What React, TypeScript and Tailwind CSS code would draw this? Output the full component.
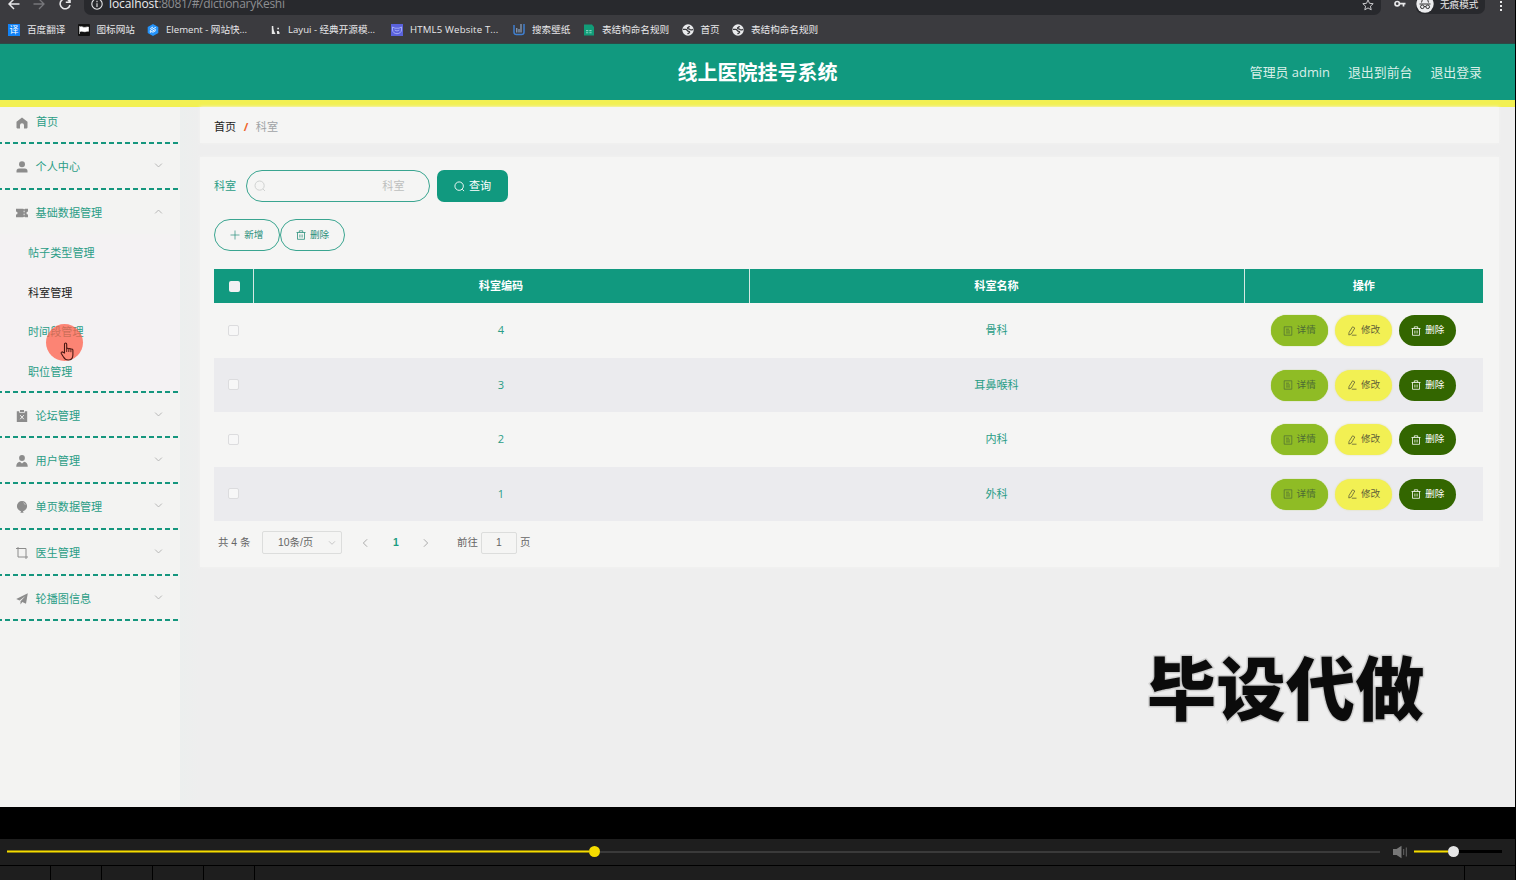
import { ReactNode } from "react";
import clsx from "clsx";

interface IconProps {
  className?: string;
}

const HomeIcon = ({ className }: IconProps) => (
  <svg viewBox="0 0 12 12" className={className} fill="currentColor">
    <path d="M6 .4 11.500 4.800v5.800a.8.8 0 0 1-.8.8H8V8.300a2 2 0 0 0-4 0v3.100H1.300a.8.8 0 0 1-.8-.8V4.800z" />
  </svg>
);

const UserIcon = ({ className }: IconProps) => (
  <svg viewBox="0 0 12 12" className={className} fill="currentColor">
    <circle cx="6" cy="3.2" r="3" />
    <path d="M.5 11.600v-1.600a2.600 2.600 0 0 1 2.600-2.600h5.800a2.600 2.600 0 0 1 2.600 2.600v1.600z" />
  </svg>
);

const TicketIcon = ({ className }: IconProps) => (
  <svg viewBox="0 0 13 10" className={className} fill="currentColor">
    <path d="M0 .3h7.800l1 1 1-1H13v3a1.700 1.700 0 0 0 0 3.400v3H9.800l-1-1-1 1H0v-3a1.700 1.700 0 0 0 0-3.400z" />
    <path d="M8.800 2.500v1.700M8.800 5.700v1.700" stroke="#f3f3f2" strokeWidth="1" />
  </svg>
);

const ClipboardIcon = ({ className }: IconProps) => (
  <svg viewBox="0 0 12 12" className={className} fill="currentColor">
    <path d="M.8 1.200h2.400v1.600h5.600V1.200h2.400V12H.8z" />
    <path d="M4 0h4v2H4z" />
    <path d="m4.200 5.200 3.600 4M7.800 5.200l-3.600 4" stroke="#f3f3f2" strokeWidth="1" />
  </svg>
);

const PersonIcon = ({ className }: IconProps) => (
  <svg viewBox="0 0 12 12" className={className} fill="currentColor">
    <circle cx="6" cy="3" r="2.900" />
    <path d="M.2 11.800c.1-3 1.300-4.600 3.700-5l2.100 1.700 2.100-1.700c2.400.4 3.600 2 3.700 5z" />
  </svg>
);

const BalloonIcon = ({ className }: IconProps) => (
  <svg viewBox="0 0 12 13" className={className} fill="currentColor">
    <path d="M6 0a5.500 5.500 0 0 1 5.500 5.500c0 2.800-2 4.900-4.500 5.500l.8 1.700H4.200L5 11C2.500 10.400.5 8.300.5 5.500A5.500 5.500 0 0 1 6 0z" />
    <path d="M7.500 1.800c1.200.5 1.900 1.400 2.100 2.600" stroke="#d8d8d8" strokeWidth=".7" fill="none" />
  </svg>
);

const CropIcon = ({ className }: IconProps) => (
  <svg viewBox="0 0 12 12" className={className} fill="none" stroke="currentColor">
    <path d="M2 0v10h10M0 1.500h10V12" />
  </svg>
);

const PlaneIcon = ({ className }: IconProps) => (
  <svg viewBox="0 0 12 12" className={className} fill="currentColor">
    <path d="M11.800.3 10 10.800 6.300 9 4.500 11.600V8.200L9.500 3 3.500 7.500.2 6z" />
  </svg>
);

const SearchIcon = ({ className }: IconProps) => (
  <svg viewBox="0 0 12 12" className={className} fill="none" stroke="currentColor">
    <circle cx="5.600" cy="5.600" r="4.600" />
    <path d="m9 9 2 2" />
  </svg>
);

const PlusIcon = ({ className }: IconProps) => (
  <svg viewBox="0 0 10 10" className={className} fill="none" stroke="currentColor" strokeWidth=".7">
    <path d="M5 .5v9M.5 5h9" />
  </svg>
);

const TrashIcon = ({ className }: IconProps) => (
  <svg viewBox="0 0 10 10" className={className} fill="none" stroke="currentColor" strokeWidth=".8">
    <path d="M.5 2.500h9M3.300 2.300V.8h3.400v1.500M1.500 2.500v6.800h7V2.500M3.900 4.500v3M6.100 4.500v3" />
  </svg>
);

const DocumentIcon = ({ className }: IconProps) => (
  <svg viewBox="0 0 10 10" className={className} fill="none" stroke="currentColor" strokeWidth=".7">
    <path d="M1.200.8h7.600v8.400H1.200zM3 3.200h3M3 5h4M3 6.900h4" />
  </svg>
);

const EditIcon = ({ className }: IconProps) => (
  <svg viewBox="0 0 10 10" className={className} fill="none" stroke="currentColor" strokeWidth=".8">
    <path d="M5.600.8 7.800 2 4.300 8l-2.500 1 .2-2.500zM4.800 9.200H9.500" />
  </svg>
);

const Chevron = ({ className }: IconProps) => (
  <svg viewBox="0 0 8 8" className={className} fill="none" stroke="currentColor" strokeWidth=".8">
    <path d="m1 2.300 3 3 3-3" />
  </svg>
);

const GlobeIcon = () => (
  <svg viewBox="0 0 12 12" className="size-[12px]">
    <circle cx="6" cy="6" r="5.700" fill="#e9eaec" />
    <path
      d="M1 5.300h2.700c1.800 0 1.300 2 3 2 1.200 0 1.200 1.300.2 1.700l-1.400.9M10.800 5.200c-.9 1-2.500.9-3 .2-.6-.8-2.300-.3-2.300-1.400 0-.9 1.700-.5 2-1.800"
      fill="none"
      stroke="#3b3b3f"
      strokeWidth="1.300"
    />
  </svg>
);

const bookmarks: { label: string; width: string; icon: ReactNode }[] = [
  {
    label: "百度翻译",
    width: "w-[69.500px]",
    icon: (
      <span className="flex size-[12px] items-center justify-center bg-[#1282f5] text-[9px] leading-none text-white">
        译
      </span>
    ),
  },
  {
    label: "图标网站",
    width: "w-[69.500px]",
    icon: (
      <svg viewBox="0 0 12 12" className="size-[12px]">
        <rect width="12" height="12" rx="1" fill="#111" />
        <path
          d="M1.500 2v8M2 3c2-1 3.500.8 5 .4 1-.2 2-.6 3.500-.4v4.300c-2-.3-3 .6-4.200.4C4.800 7.500 4 7 2 7.500z"
          fill="#fff"
          stroke="#fff"
          strokeWidth=".6"
        />
      </svg>
    ),
  },
  {
    label: "Element - 网站快...",
    width: "w-[122px]",
    icon: (
      <svg viewBox="0 0 12 12" className="size-[12px]">
        <path d="M6 0 11.300 3v6L6 12 .7 9V3z" fill="#2493fa" />
        <path d="M8.800 3.300 3.300 6.400v2l5.500-3.200M8.800 6.500 5.500 8.500M3.300 4.600 6 3" stroke="#fff" strokeWidth=".9" fill="none" />
      </svg>
    ),
  },
  {
    label: "Layui - 经典开源模...",
    width: "w-[122px]",
    icon: (
      <svg viewBox="0 0 12 12" className="size-[12px]" fill="#e8e8e8">
        <path d="M2.800 2h1.500c0 3 .5 5 2.200 8H2.800zM8.300 3.800H10v1.500H8.300zM7.800 7h1.800l.9 1.500V10H8.200z" />
      </svg>
    ),
  },
  {
    label: "HTML5 Website T...",
    width: "w-[122px] tracking-[0.180px]",
    icon: (
      <svg viewBox="0 0 12 12" className="size-[12px]">
        <rect width="12" height="12" fill="#5a62dc" />
        <path d="M1.500 3 4 4.200h4L10.500 3v3c0 2-2 3.700-4.500 3.700S1.500 8 1.500 6z" fill="none" stroke="#b4bdfa" strokeWidth=".8" />
        <path d="m3.700 6 2.300 1 2.300-1" fill="none" stroke="#b4bdfa" strokeWidth=".8" />
      </svg>
    ),
  },
  {
    label: "搜索壁纸",
    width: "w-[70px]",
    icon: (
      <svg viewBox="0 0 12 12" className="size-[12px]" fill="none">
        <path d="M1 1v7.200c0 1.500 1 2.300 2.500 2.300h5c1.500 0 2.500-.8 2.500-2.300V0" stroke="#3f7fd0" strokeWidth="1.500" />
        <path d="M3.800 4v4.500M6 5v3.500M8 0v8.500" stroke="#a9c8ef" strokeWidth=".9" />
      </svg>
    ),
  },
  {
    label: "表结构命名规则",
    width: "w-[98.500px]",
    icon: (
      <svg viewBox="0 0 12 12" className="size-[12px]">
        <path d="M1 .5h8L11 3v8.500H1z" fill="#119c78" />
        <path d="M3 6h2.300v1.300H3zM6.300 6h2.300v1.300H6.300zM3 8.200h2.300v1H3zM6.300 8.200h2.300v1H6.300z" fill="#7fd3bd" />
      </svg>
    ),
  },
  { label: "首页", width: "w-[50.500px]", icon: <GlobeIcon /> },
  { label: "表结构命名规则", width: "w-[110px]", icon: <GlobeIcon /> },
];

const menu = [
  { label: "个人中心", Icon: UserIcon },
  { label: "基础数据管理", Icon: TicketIcon, children: ["帖子类型管理", "科室管理", "时间段管理", "职位管理"] },
  { label: "论坛管理", Icon: ClipboardIcon },
  { label: "用户管理", Icon: PersonIcon },
  { label: "单页数据管理", Icon: BalloonIcon },
  { label: "医生管理", Icon: CropIcon },
  { label: "轮播图信息", Icon: PlaneIcon },
];

const rows = [
  { code: 4, name: "骨科" },
  { code: 3, name: "耳鼻喉科" },
  { code: 2, name: "内科" },
  { code: 1, name: "外科" },
];

function BrowserChrome() {
  return (
    <div className="h-[44px] overflow-hidden border-b border-[#2c4a46] bg-[#3b3b3f] text-[#e8e8ea]">
      <div className="flex h-[15px] items-start">
        <div className="flex w-[84px] shrink-0 gap-[13px] pl-[8px]">
          <svg viewBox="0 0 12 12" className="-mt-[2px] size-[12px]" fill="none" stroke="#e8e8ea" strokeWidth="1.500">
            <path d="M11.500 6H1M6 1 1 6l5 5" />
          </svg>
          <svg viewBox="0 0 12 12" className="-mt-[2px] size-[12px]" fill="none" stroke="#77777b" strokeWidth="1.300">
            <path d="M.5 6H11M6 1l5 5-5 5" />
          </svg>
          <svg viewBox="0 0 12 12" className="-mt-[2px] ml-[1px] size-[12px]" fill="none" stroke="#e8e8ea" strokeWidth="1.600">
            <path d="M10.300 3A5 5 0 1 0 11 7M11 0v4.300H6.800" />
          </svg>
        </div>
        <div className="flex h-[15px] w-[1297px] items-start rounded-b-[7px] bg-[#28292d] pl-[7px]">
          <svg viewBox="0 0 12 12" className="-mt-[2px] size-[12px]" fill="none" stroke="#e8e8ea" strokeWidth="1.100">
            <circle cx="6" cy="6" r="5.200" />
            <path d="M6 5.300V9M6 2.800v1.400" />
          </svg>
          <div className="-mt-[4px] ml-[6px] text-[12px] leading-[16px] tracking-[-0.290px] text-[#8d8e92]">
            <span className="tracking-[-0.100px] text-[#ececee]">localhost</span>:8081/#/dictionaryKeshi
          </div>
          <svg viewBox="0 0 12 12" className="-mt-[1px] mr-[7px] ml-auto size-[12px]" fill="none" stroke="#c9c9cc">
            <path d="m6 .9 1.500 3.400 3.700.4-2.800 2.500.8 3.600L6 8.900l-3.200 1.900.8-3.600L.8 4.700l3.700-.4z" />
          </svg>
        </div>
        <svg viewBox="0 0 12 8" className="ml-[13px] h-[8px] w-[12px]" fill="none" stroke="#e8e8ea" strokeWidth="1.700">
          <circle cx="3.200" cy="3.700" r="2.200" />
          <path d="M5.300 3.700h6.200M9.500 3.700v2.800" />
        </svg>
        <div className="ml-[10px] flex h-[14px] w-[69px] items-start rounded-b-[7px] bg-[#28292d]">
          <svg viewBox="0 0 18 18" className="-mt-[5px] size-[18px] shrink-0">
            <circle cx="9" cy="9" r="8.700" fill="#ececee" />
            <path d="M3.500 9h11M5.500 7.500 6.500 4h5l1 3.500" stroke="#333" fill="none" />
            <circle cx="6.300" cy="11.800" r="1.800" stroke="#333" fill="none" />
            <circle cx="11.700" cy="11.800" r="1.800" stroke="#333" fill="none" />
            <path d="M8.100 11.500h1.800" stroke="#333" />
          </svg>
          <span className="-mt-[2px] ml-[6px] text-[9.600px] leading-[13px] whitespace-nowrap">无痕模式</span>
        </div>
        <div className="mt-[1px] ml-[15px] flex flex-col gap-[2px]">
          <i className="size-[2px] bg-[#e8e8ea]" />
          <i className="size-[2px] bg-[#e8e8ea]" />
          <i className="size-[2px] bg-[#e8e8ea]" />
        </div>
      </div>
      <div className="flex h-[28px] items-center pt-[1px] pl-[8px] text-[9.600px]">
        {bookmarks.map((b, i) => (
          <div key={i} className={clsx("flex shrink-0 items-center gap-[7px] whitespace-nowrap", b.width)}>
            {b.icon}
            <span className="pt-[1px] leading-[14px]">{b.label}</span>
          </div>
        ))}
      </div>
    </div>
  );
}

// 2px rule under each sidebar entry, 8px dash period
const DashedLine = () => (
  <div className="h-[2px] w-[179px] bg-[repeating-linear-gradient(90deg,#15967e_0_2px,transparent_2px_5px,#15967e_5px_8px)]" />
);

function Sidebar() {
  return (
    <aside className="w-[180px] shrink-0 bg-[#f3f3f2] text-[11.100px] text-[#2a9d86]">
      <div className="flex h-[35px] items-center pb-[6px] pl-[16px]">
        <HomeIcon className="mt-[2px] size-[12px] text-[#8c8c8c]" />
        <span className="ml-[8px] leading-[16px]">首页</span>
      </div>
      <DashedLine />
      {menu.map(({ label, Icon, children }) => (
        <div key={label}>
          <div className="flex h-[43.750px] items-center pt-[2px] pl-[16px]">
            <Icon className="h-[12px] w-[12px] text-[#8c8c8c]" />
            <span className="ml-[7.600px] leading-[16px]">{label}</span>
            <Chevron
              className={clsx("mt-[-3px] mr-[17px] ml-auto size-[9px] text-[#b0b0b0]", children && "rotate-180")}
            />
          </div>
          {children && (
            <div className="h-[157.200px] bg-[#f4f2f3] pt-[0.500px]">
              {children.map((c) => (
                <div
                  key={c}
                  className={clsx("flex h-[39.400px] items-center pl-[28px]", c === "科室管理" && "text-[#222]")}
                >
                  {c}
                </div>
              ))}
            </div>
          )}
          <DashedLine />
        </div>
      ))}
    </aside>
  );
}

function DataTable() {
  return (
    <table className="mt-[18px] w-[1269px] table-fixed border-collapse text-center text-[11.100px] text-[#2a9d86]">
      <colgroup>
        <col className="w-[39px]" />
        <col className="w-[496px]" />
        <col className="w-[495px]" />
        <col className="w-[239px]" />
      </colgroup>
      <thead>
        <tr className="h-[34px] bg-[#11997f] text-white">
          <th className="border-r border-[#d5e9e3] p-0">
            <span className="ml-[15px] block size-[11px] rounded-[2px] bg-[#f1f1f3]" />
          </th>
          <th className="border-r border-[#d5e9e3] p-0 pt-[1px] font-bold">科室编码</th>
          <th className="border-r border-[#d5e9e3] p-0 pt-[1px] font-bold">科室名称</th>
          <th className="p-0 pt-[1px] font-bold">操作</th>
        </tr>
      </thead>
      <tbody>
        {rows.map((r) => (
          <tr key={r.code} className="h-[54.500px] odd:bg-[#f5f5f4] even:bg-[#ebebee]">
            <td className="p-0">
              <span className="ml-[14px] block size-[11px] rounded-[2px] border border-[#dcdcde] bg-[#f7f7f7]" />
            </td>
            <td className="p-0 pt-[1px]">{r.code}</td>
            <td className="p-0 pt-[1px]">{r.name}</td>
            <td className="p-0">
              <div className="flex justify-center gap-[7.300px] pt-[0.500px] text-[9.600px]">
                <button className="flex h-[31px] w-[57px] items-center justify-center gap-[4px] rounded-full bg-[#8fbc25] text-[#4d6b35] shadow-[0_0_1px_#8fbc25]">
                  <DocumentIcon className="size-[10px]" />
                  详情
                </button>
                <button className="flex h-[31px] w-[57px] items-center justify-center gap-[4px] rounded-full bg-[#f2f053] text-[#5f6038] shadow-[0_0_2px_#dcdca8]">
                  <EditIcon className="size-[10px]" />
                  修改
                </button>
                <button className="flex h-[31px] w-[57px] items-center justify-center gap-[4px] rounded-full bg-[#336600] text-white">
                  <TrashIcon className="size-[10px]" />
                  删除
                </button>
              </div>
            </td>
          </tr>
        ))}
      </tbody>
    </table>
  );
}

function Pagination() {
  return (
    <div className="mt-[10px] flex h-[23px] items-center pl-[4px] font-['Liberation_Sans','Noto_Sans_CJK_SC',sans-serif] text-[10.400px] text-[#666] [&_*]:shrink-0">
      <span className="w-[44px]">共 4 条</span>
      <div className="flex h-[23px] w-[80px] items-center rounded-[2px] border border-[#dcdddc] pl-[15px]">
        10条/页
        <Chevron className="mr-[5px] ml-auto size-[8px] text-[#bbb]" />
      </div>
      <Chevron className="ml-[18px] size-[10px] rotate-90 text-[#aaa]" />
      <span className="ml-[23px] w-[7px] font-bold text-[#1a9c81]">1</span>
      <Chevron className="ml-[21px] size-[10px] -rotate-90 text-[#aaa]" />
      <span className="ml-[26px] w-[24px]">前往</span>
      <div className="flex h-[22px] w-[36px] items-center justify-center rounded-[2px] border border-[#dcdddc]">1</div>
      <span className="ml-[3px]">页</span>
    </div>
  );
}

function Content() {
  return (
    <main className="w-[1299px]">
      <div className="flex h-[36px] items-center bg-[#f5f5f4] pt-[5px] pl-[14px] text-[11.100px] shadow-[0_0_3px_#f3f3f2]">
        <span className="text-[#222]">首页</span>
        <span className="mx-[7.500px] font-bold text-[#f0662b]">/</span>
        <span className="text-[#a0a3a6]">科室</span>
      </div>
      <div className="mt-[14px] h-[410px] bg-[#f5f5f4] pt-[13px] pl-[14px] shadow-[0_0_3px_#f3f3f2]">
        <div className="flex h-[32px] items-center text-[11.100px] text-[#2a9d86]">
          <span className="w-[31.500px]">科室</span>
          <div className="flex h-[32px] w-[184px] items-center rounded-full border border-[#3aa590] pr-[24px] pl-[7px] text-[#bdbfbe]">
            <SearchIcon className="size-[12px] text-[#d0d2d1]" />
            <span className="ml-auto">科室</span>
          </div>
          <button className="ml-[7.500px] flex h-[32px] w-[71px] items-center justify-center gap-[4px] rounded-[7px] bg-[#11997f] text-white">
            <SearchIcon className="size-[11px]" />
            查询
          </button>
        </div>
        <div className="mt-[17px] flex h-[32px] text-[9.600px] text-[#2a8f7b]">
          <button className="flex w-[65.700px] items-center justify-center gap-[4px] rounded-full border border-[#3aa590]">
            <PlusIcon className="size-[10px]" />
            新增
          </button>
          <button className="flex w-[65.700px] items-center justify-center gap-[4px] rounded-full border border-[#3aa590]">
            <TrashIcon className="size-[10px]" />
            删除
          </button>
        </div>
        <DataTable />
        <Pagination />
      </div>
    </main>
  );
}

function Player() {
  return (
    <div className="h-[73px] bg-black pt-[32px]">
      <div className="flex h-[26px] w-[1515px] items-center bg-[#1e1e1e] pb-[1px] pl-[7px]">
        <div className="h-[3px] w-[582px] border-y border-[#8d7f0a] bg-[#f5dc00]" />
        <div className="h-[11px] w-[11px] rounded-full bg-[#f5dc00]" />
        <div className="h-[2px] w-[780px] bg-[#3a3a3a]" />
        <svg viewBox="0 0 15 14" className="ml-[13px] h-[14px] w-[15px]">
          <path d="M0 4h3.500L8.500.8v12.400L3.500 10H0z" fill="#777" />
          <path d="M10.700 4v6M13.300 2.500v9" stroke="#666" strokeWidth="1" />
        </svg>
        <div className="ml-[6px] h-[3px] w-[34px] border-y border-[#8d7f0a] bg-[#f5dc00]" />
        <div className="size-[11px] rounded-full bg-[#e6e6e6]" />
        <div className="h-[3px] w-[43px] bg-black" />
      </div>
      <div className="mt-[1px] flex h-[14px] w-[1515px] gap-px">
        <div className="w-[50px] bg-[#1e1e1e]" />
        <div className="w-[50px] bg-[#1e1e1e]" />
        <div className="w-[50px] bg-[#1e1e1e]" />
        <div className="w-[50px] bg-[#1e1e1e]" />
        <div className="w-[50px] bg-[#1e1e1e]" />
        <div className="flex-1 bg-[#1e1e1e]" />
        <div className="w-[50px] bg-[#1e1e1e]" />
      </div>
    </div>
  );
}

export default function App() {
  return (
    <div className="relative h-[880px] w-[1516px] overflow-hidden bg-black font-['Open_Sans','Noto_Sans_CJK_SC',sans-serif]">
      <div className="h-[807px] w-[1515px] bg-[#eeeeee]">
        <BrowserChrome />
        <header className="flex h-[63px] items-center border-b-[7px] border-[#f2f053] bg-[#11997f] text-[#d9efe9]">
          <div className="w-[420px]" />
          <h1 className="flex-1 pt-[1px] text-center text-[20px] font-bold text-white">线上医院挂号系统</h1>
          <nav className="flex w-[420px] justify-end gap-[18px] pt-[1px] pr-[33px] text-[12.900px]">
            <span>管理员 admin</span>
            <span>退出到前台</span>
            <span>退出登录</span>
          </nav>
        </header>
        <div className="flex h-[700px]">
          <Sidebar />
          <div className="w-[20px] bg-linear-to-r from-[#ecefee] to-[#eeeeee]" />
          <Content />
        </div>
      </div>
      <Player />

      <div className="absolute top-[638px] left-[1147px] text-[69px] leading-[100px] font-black tracking-[0.500px] whitespace-nowrap text-[#0b0b0b] [paint-order:stroke_fill] [text-shadow:0_0_2px_#888] [-webkit-text-stroke:3px_#dcdcdc]">
        毕设代做
      </div>
      <div className="absolute top-[324px] left-[46px] size-[37px] rounded-full bg-[#ff5f4a]/75" />
      <svg viewBox="0 0 14 19" className="absolute top-[342px] left-[60px] h-[19px] w-[15px]">
        <path
          d="M4 11V2.200c0-1.600 2.200-1.600 2.200 0v5c0-1.300 2.100-1.200 2.100.2 0-1.200 2.100-1.100 2.100.4 0-1.100 2-1 2 .4v4.500c0 3-1.300 5.300-4.700 5.300-2.800 0-3.800-1.300-4.700-3L.8 11.500c-.7-1.300.9-2 1.700-1.200z"
          fill="#ff8a78"
          stroke="#4a1712"
          strokeWidth="1.100"
        />
        <path d="M6.200 7v3M8.300 7.500V10M10.400 8v2.200" stroke="#4a1712" strokeWidth=".9" />
      </svg>
    </div>
  );
}
